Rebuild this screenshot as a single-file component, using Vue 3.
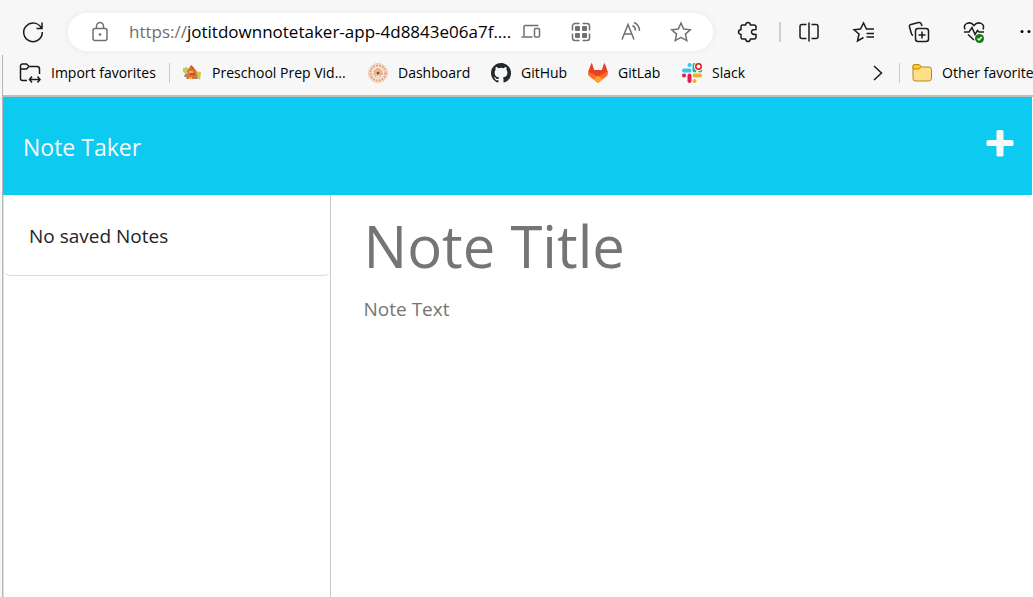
<script setup>
import { ref } from 'vue'

const title = ref('')
const text = ref('')
</script>

<template>
  <div class="window">
    <div class="toolbar">
      <button class="reload" aria-label="Refresh">
        <svg width="24" height="24" viewBox="0 0 24 24" class="dark">
          <path d="M20.5 8.5A9.3 9.3 0 1 0 21.3 12M21 2.5V8.5H15.5" />
        </svg>
      </button>
      <div class="address">
        <button class="lock" aria-label="View site information">
          <svg width="18" height="22" viewBox="0 0 18 22" class="gray">
            <rect x="2" y="7.5" width="14" height="12" rx="2" />
            <path d="M5.500 7.500V5a3.500 3.500 0 0 1 7 0v2.500" />
            <circle cx="9" cy="13.500" r="1.300" class="gray-fill dot" />
          </svg>
        </button>
        <div class="url"><span class="scheme">https://</span>jotitdownnotetaker-app-4d8843e06a7f....</div>
        <button class="page-action" aria-label="Send to device">
          <svg width="22" height="22" viewBox="0 0 22 22" class="gray">
            <path d="M4 15V5.500a1 1 0 0 1 1-1H18.500M1.500 16H12.500" />
            <rect x="14.500" y="7.500" width="5" height="8.500" rx="1" />
          </svg>
        </button>
        <button class="page-action" aria-label="Apps">
          <svg width="22" height="22" viewBox="0 0 22 22" class="gray">
            <path d="M2.500 9.500V5a2.500 2.500 0 0 1 2.500-2.500H9.500M12.500 2.500H17a2.500 2.500 0 0 1 2.500 2.500V9.500M19.500 12.500V17a2.500 2.500 0 0 1-2.500 2.500H12.500M9.500 19.500H5a2.500 2.500 0 0 1-2.500-2.500V12.500" />
            <g class="gray-fill dot"><rect x="5" y="5" width="5" height="5" rx="1" /><rect x="12" y="5" width="5" height="5" rx="1" /><rect x="5" y="12" width="5" height="5" rx="1" /><rect x="12" y="12" width="5" height="5" rx="1" /></g>
          </svg>
        </button>
        <button class="page-action" aria-label="Read aloud">
          <svg width="22" height="22" viewBox="0 0 22 22" class="gray">
            <path d="M2 18.500L8 3.500L14 18.500M4.200 13h7.600M12.500 4.500q3 1.500 3 5M14 1.500q5.500 2.500 5.500 8.500" />
          </svg>
        </button>
        <button class="page-action" aria-label="Add to favorites">
          <svg width="22" height="22" viewBox="0 0 22 22" class="gray">
            <path d="M11 2L13.700 8L20.300 8.700L15.400 13.100L16.800 19.600L11 16.300L5.200 19.600L6.600 13.100L1.700 8.700L8.300 8Z" />
          </svg>
        </button>
      </div>
      <button class="tool extensions" aria-label="Extensions">
        <svg width="24" height="24" viewBox="0 0 24 24" class="dark">
          <path d="M6.500 5H9.500Q10 2.500 12 2.500T14.500 5H18Q20 5 20 7V9.500Q15.500 9.300 15.500 12T20 14.500V17Q20 19 18 19H14.500Q14 21.500 12 21.500T9.500 19H6.500Q5 19 5 17.500V14.500Q2.500 14 2.500 12T5 9.500V6.500Q5 5 6.500 5Z" />
        </svg>
      </button>
      <span class="separator"></span>
      <button class="tool" aria-label="Split screen">
        <svg width="24" height="24" viewBox="0 0 24 24" class="dark">
          <path d="M12 2.500v19M9.500 4.500H5A2 2 0 0 0 3 6.500v10a2 2 0 0 0 2 2H9.500M14.500 4.500h4.500a2 2 0 0 1 2 2v10a2 2 0 0 1-2 2H14.500" />
        </svg>
      </button>
      <button class="tool" aria-label="Favorites">
        <svg width="24" height="24" viewBox="0 0 24 24" class="dark">
          <path d="M22 9H14.500L11.500 3L8.500 9L2 9.800L7 14L5.500 21L11.500 17.500M14.500 13.500H22M14.500 17H22" />
        </svg>
      </button>
      <button class="tool" aria-label="Collections">
        <svg width="24" height="24" viewBox="0 0 24 24" class="dark">
          <path d="M6 15.500Q4.800 15 4.400 13.500L2.500 7Q2 5 4 4.400L11.500 2.500Q13.500 2 14.300 4L15 6" />
          <rect x="8.500" y="8.500" width="13" height="13" rx="2.500" />
          <path d="M15 11.500v7M11.500 15h7" />
        </svg>
      </button>
      <button class="tool" aria-label="Browser essentials">
        <svg width="24" height="24" viewBox="0 0 24 24" class="dark">
          <path d="M3 9.500C0.500 3.500 8 0.500 12 5.500C16 0.500 23.500 3.500 21 9.500M2 12H7L10 7.500L13 14.500L15.500 10.500L17 12H22M6 14.500L12 20" />
          <circle cx="17.500" cy="18.500" r="4.500" class="status" />
          <path d="M15.500 18.500l1.500 1.500 2.700-3" class="tick" />
        </svg>
      </button>
      <button class="more" aria-label="Settings and more">
        <svg width="14" height="24" viewBox="0 0 14 24"><circle cx="3" cy="11.500" r="1.500" /><circle cx="10" cy="11.500" r="1.500" /></svg>
      </button>
    </div>

    <div class="viewport">
      <nav class="bookmarks" aria-label="Favorites bar">
        <a href="#" class="bookmark import">
          <svg width="22" height="22" viewBox="0 0 22 22" class="dark">
            <path d="M8 18.500H3.500a2 2 0 0 1-2-2V4a2 2 0 0 1 2-2H7.500L10 4.500H18a2.500 2.500 0 0 1 2.500 2.500V12M1.500 7H7.500L10 4.500M11 17.500H21M13 14.500l-2.500 3 2.500 3M18.500 14.500l2.500 3-2.500 3" />
          </svg>
          Import favorites
        </a>
        <span class="divider"></span>
        <a href="#" class="bookmark preschool">
          <svg width="20" height="20" viewBox="0 0 20 20">
            <path d="M1 5l4-1 3 5-2 4-5-4ZM12 8l7 1-1 8-3-3-4-1Z" fill="#d0c84e" />
            <path d="M5 8l4-6 5 5 2 9H4l2-5Z" fill="#d77435" />
            <path d="M9 2l3 3-2 1ZM8 10h5v2H8Z" fill="#e93c20" />
            <path d="M3 11h3v3H2ZM12 12h3v3h-3Z" fill="#89908a" />
            <path d="M7 8h4v2H7ZM7 14h3v2H7Z" fill="#f5b739" />
          </svg>
          Preschool Prep Vid...
        </a>
        <a href="#" class="bookmark dashboard">
          <svg width="20" height="20" viewBox="0 0 20 20" fill="none" stroke="#dda47f">
            <circle cx="10" cy="10" r="9.500" fill="#fae8db" stroke="#ecc9ad" />
            <circle cx="10" cy="10" r="7.500" stroke-width="2" stroke-dasharray="2 1" />
            <circle cx="10" cy="10" r="4.500" stroke-dasharray="2 1" />
            <path d="M7 12V8l3-2 3 2v4Z" fill="#efbd99" /><circle cx="10" cy="10" r="1" fill="#9b3e16" stroke="#9b3e16" />
          </svg>
          Dashboard
        </a>
        <a href="#" class="bookmark github">
          <svg width="20" height="20" viewBox="0 0 16 16" fill="#24292e">
            <path d="M8 0C3.580 0 0 3.580 0 8c0 3.540 2.290 6.530 5.470 7.590.4.070.55-.17.55-.38 0-.19-.01-.82-.01-1.490-2.010.37-2.530-.49-2.690-.94-.09-.23-.48-.94-.82-1.130-.28-.15-.68-.52-.01-.53.63-.01 1.080.58 1.230.82.72 1.210 1.870.87 2.330.66.07-.52.28-.87.51-1.070-1.780-.2-3.640-.89-3.640-3.950 0-.87.31-1.590.82-2.150-.08-.2-.36-1.020.08-2.120 0 0 .67-.21 2.200.82a7.600 7.600 0 0 1 4 0c1.530-1.040 2.200-.82 2.200-.82.44 1.100.16 1.920.08 2.120.51.56.82 1.270.82 2.150 0 3.070-1.870 3.750-3.650 3.950.29.25.54.73.54 1.480 0 1.070-.01 1.930-.01 2.200 0 .21.15.46.55.38A8 8 0 0 0 16 8c0-4.420-3.580-8-8-8Z" />
          </svg>
          GitHub
        </a>
        <a href="#" class="bookmark gitlab">
          <svg width="20" height="20" viewBox="0 0 20 20">
            <path d="M10 20L1 13Q-.5 11.500.3 9L3.200.7Q3.500 0 4 .7L6 7h8L16 .7Q16.500 0 16.800.7L19.700 9Q20.500 11.500 19 13Z" fill="#fc6d26" />
            <path d="M.3 9L3.200.7Q3.500 0 4 .7L6 7h8L16 .7Q16.500 0 16.800.7L19.700 9Q16 9.500 10 14Q4 9.500.3 9Z" fill="#e24329" />
            <path d="M5.500 16.300L10 12.700L14.500 16.300L10 20Z" fill="#fca326" />
          </svg>
          GitLab
        </a>
        <a href="#" class="bookmark slack">
          <svg width="20" height="20" viewBox="0 0 20 20" fill="none" stroke-width="4" stroke-linecap="round">
            <path d="M2 7.500h5.500M7.500 2h.1" stroke="#36c5f0" />
            <path d="M12.500 2v5.500M18 7.500h.1" stroke="#2eb67d" />
            <path d="M12.500 12.500H18M12.500 18h.1" stroke="#ecb22e" />
            <path d="M7.500 12.500V18M2 12.500h.1" stroke="#e01e5a" />
            <circle cx="16.500" cy="3.500" r="3" fill="#fff" stroke="#f7f7f7" stroke-width="3" />
            <circle cx="16.500" cy="3.500" r="2.700" fill="#fff" stroke="#eb1220" stroke-width="1.500" />
          </svg>
          Slack
        </a>
        <button class="overflow" aria-label="More favorites">
          <svg width="10" height="18" viewBox="0 0 10 18" class="dark"><path d="M1 2l7.500 7L1 16" /></svg>
        </button>
        <span class="divider"></span>
        <a href="#" class="bookmark other">
          <svg width="20" height="20" viewBox="0 0 20 20" fill="#ffdf85" stroke="#b9881c">
            <path d="M1 5V3.500a2 2 0 0 1 2-2H7l2.500 2.500H17a2.500 2.500 0 0 1 2.500 2.500V15a3 3 0 0 1-3 3H3.500A2.500 2.500 0 0 1 1 15.500Z" />
            <path d="M1 5V3.500a2 2 0 0 1 2-2H7L9.300 3.800L7 6H2Q1 6 1 5Z" fill="#ffc91f" />
          </svg>
          Other favorites
        </a>
      </nav>

      <header class="app-header">
        <a href="#" class="brand">Note Taker</a>
        <button class="new-note" aria-label="New note">
          <svg width="28" height="28" viewBox="0 0 28 28" fill="#f8f9fa"><path d="M12 1h4q1.500 0 1.500 1.500V11H26q1.500 0 1.500 1.500v3Q27.500 17 26 17H17.500v9q0 1.500-1.500 1.500H12q-1.500 0-1.500-1.500V17H2Q.5 17 .5 15.500v-3Q.5 11 2 11h8.500V2.500Q10.500 1 12 1Z" /></svg>
        </button>
      </header>
      <main class="workspace">
        <aside class="sidebar">
          <ul class="note-list"><li>No saved Notes</li></ul>
        </aside>
        <section class="editor">
          <input v-model="title" class="note-title" type="text" placeholder="Note Title" aria-label="Note title">
          <textarea v-model="text" class="note-text" placeholder="Note Text" aria-label="Note text"></textarea>
        </section>
      </main>
    </div>
  </div>
</template>

<style>
body {
  margin: 0;
  background: #f7f7f7;
}
</style>

<style scoped>
* {
  box-sizing: border-box;
}
.window {
  display: flex;
  flex-direction: column;
  min-height: 100vh;
  overflow: hidden;
  font-family: "Open Sans", "Noto Sans", sans-serif;
  background: #f7f7f7;
}
button {
  display: flex;
  align-items: center;
  justify-content: center;
  flex: none;
  padding: 0;
  border: 0;
  background: none;
}
svg {
  display: block;
  flex: none;
}
a {
  color: inherit;
  text-decoration: none;
}
.dark {
  fill: none;
  stroke: #1b1b1b;
  stroke-width: 1.5;
}
.gray {
  fill: none;
  stroke: #707070;
  stroke-width: 1.5;
}
.gray-fill {
  fill: #707070;
}
.dot {
  stroke: none;
}
.status {
  fill: #107c10;
  stroke: none;
}
.tick {
  stroke: #fff;
}
.toolbar {
  display: flex;
  align-items: center;
  height: 55px;
  padding-top: 9px;
}
.reload {
  width: 66px;
}
.address {
  display: flex;
  align-items: center;
  flex: 1;
  min-width: 0;
  height: 38px;
  margin-left: 2px;
  padding-right: 7px;
  border-radius: 19px;
  background: #fff;
  box-shadow: 0 0 6px #e9e9e9;
}
.lock {
  width: 61px;
  padding-left: 3px;
}
.url {
  flex: 1;
  min-width: 0;
  white-space: nowrap;
  font-size: 17px;
  line-height: 24px;
  color: #000;
}
.scheme {
  color: #707070;
}
.page-action {
  width: 50px;
}
.tool {
  width: 55px;
}
.extensions {
  width: 66px;
  padding-left: 4px;
}
.separator {
  flex: none;
  width: 2px;
  height: 20px;
  background: #cfcfcf;
}
.more {
  width: 32px;
  justify-content: flex-end;
  overflow: hidden;
}
.viewport {
  display: flex;
  flex-direction: column;
  flex: 1;
  margin-left: 2px;
  border-left: 1px solid #b7b7b7;
}
.bookmarks {
  display: flex;
  align-items: center;
  height: 42px;
  padding: 0 0 4px 16px;
  border-bottom: 2px solid #bdbdbd;
  font-size: 14px;
  line-height: 20px;
  color: #000;
  white-space: nowrap;
}
.bookmark {
  display: flex;
  align-items: center;
  flex: none;
  gap: 10px;
}
.import {
  width: 150px;
}
.divider {
  flex: none;
  width: 1px;
  height: 20px;
  background: #cacaca;
}
.preschool {
  width: 198px;
  padding-left: 12px;
}
.dashboard {
  width: 123px;
}
.github {
  width: 97px;
}
.gitlab {
  width: 94px;
}
.overflow {
  margin-left: auto;
  width: 42px;
}
.other {
  width: 133px;
  padding-left: 12px;
  overflow: hidden;
}
.app-header {
  display: flex;
  align-items: center;
  justify-content: space-between;
  height: 98px;
  margin-right: 1px;
  padding: 0 18px 0 20px;
  background: #0dcaf0;
  color: #f8f9fa;
}
.brand {
  padding-top: 2px;
  font-size: 23px;
  line-height: 36px;
}
.new-note {
  padding-bottom: 6px;
}
.workspace {
  display: flex;
  flex: 1;
  background: #fff;
}
.sidebar {
  width: 31.8%;
  border-left: 1px solid #dedede;
  border-right: 1px solid #cbcbcb;
}
.note-list {
  margin: 0;
  padding: 0;
  border-bottom: 1px solid #dcdcdc;
  border-radius: 0 0 6px 6px;
  list-style: none;
  font-size: 19px;
  line-height: 30px;
  color: #212529;
}
.note-list li {
  padding: 26px 25px 24px;
}
.editor {
  display: flex;
  flex-direction: column;
  flex: 1;
  min-width: 0;
  padding: 15px 33px 0;
}
.note-title,
.note-text {
  width: 100%;
  padding: 0;
  border: 0;
  outline: 0;
  background: none;
  font-family: inherit;
  color: #212529;
}
.note-title {
  height: 72px;
  font-size: 58px;
  line-height: 72px;
}
.note-text {
  flex: 1;
  margin-top: 12px;
  font-size: 19px;
  line-height: 30px;
  resize: none;
}
.note-title::placeholder,
.note-text::placeholder {
  color: #757575;
  opacity: 1;
}
</style>
